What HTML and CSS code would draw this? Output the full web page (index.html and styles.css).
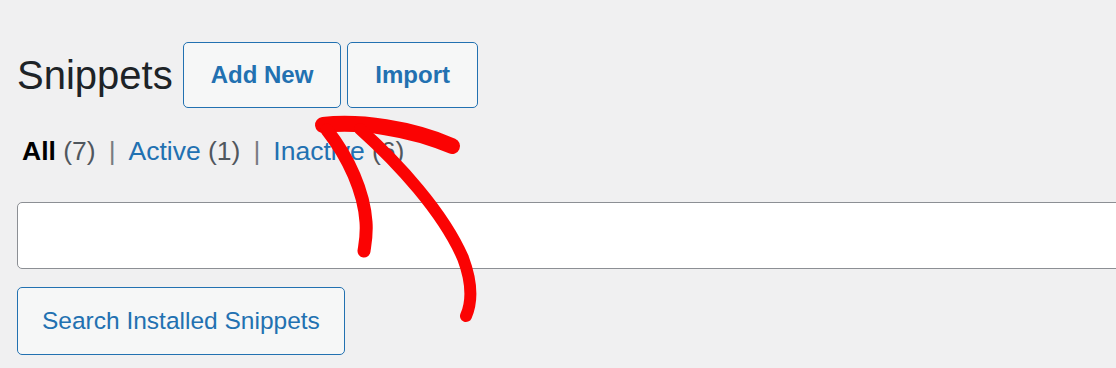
FILE: index.html
```html
<!DOCTYPE html>
<html lang="en">
<head>
    <meta charset="utf-8">
    <title>Snippets</title>
    <link rel="stylesheet" href="styles.css">
</head>

<body>
    <div class="wrap">
        <!-- Page title with actions -->
        <div class="title-row">
            <h1 class="page-title">Snippets</h1>
            <a class="title-action" href="#">Add New</a>
            <a class="title-action" href="#">Import</a>
        </div>

        <!-- Status filters -->
        <ul class="subsubsub">
            <li class="current">All <span class="count">(7)</span></li>
            <li class="sep">|</li>
            <li><a href="#">Active <span class="count">(1)</span></a></li>
            <li class="sep">|</li>
            <li><a href="#">Inactive <span class="count">(6)</span></a></li>
        </ul>

        <!-- Search -->
        <div class="search-box">
            <input type="search" class="search-input" />
            <button class="search-button">Search Installed Snippets</button>
        </div>
    </div>

    <!-- Hand drawn arrow over the page -->
    <svg class="annotation" width="1116" height="368" viewBox="0 0 1116 368">
        <g fill="none" stroke="#fb0303" stroke-linecap="round" stroke-linejoin="round">
            <path d="M 323 125 C 360 121, 410 128, 452 146" stroke-width="16" />
            <path d="M 327 130 C 349 158, 364 192, 366 222 C 367 235, 365 244, 364 251" stroke-width="13" />
            <path d="M 360 129 C 398 163, 443 212, 463 258 C 472 282, 473 300, 466 316" stroke-width="12" />
        </g>
    </svg>
</body>
</html>
```

FILE: styles.css
```css
body {
    margin: 0;
    padding: 0;
    background-color: #f0f0f1;
    color: #1d2327;
    font-family: "Liberation Sans", Arial, Helvetica, sans-serif;
    overflow: hidden;
}

.wrap {
    padding-left: 17px;
    overflow: hidden;
}

/* Title row */
.title-row {
    display: flex;
    align-items: center;
    margin-top: 42px;
}

.page-title {
    margin: 0 10px 0 0;
    font-size: 40px;
    font-weight: 400;
    line-height: 52px;
    color: #1d2327;
}

.title-action {
    display: block;
    margin-right: 6px;
    padding: 18px 27px;
    line-height: 28px;
    font-size: 24px;
    font-weight: 700;
    color: #2271b1;
    text-decoration: none;
    background-color: #f6f7f7;
    border: 1px solid #2271b1;
    border-radius: 5px;
}

/* Filters */
.subsubsub {
    display: flex;
    list-style: none;
    margin: 25px 0 0 0;
    padding: 0 0 0 5px;
    font-size: 26.5px;
    line-height: 36px;
    color: #50575e;
}

.subsubsub .current {
    color: #000;
    font-weight: 700;
}

.subsubsub .current .count {
    font-weight: 400;
    color: #50575e;
}

.subsubsub a {
    color: #2271b1;
    text-decoration: none;
}

.subsubsub a .count {
    color: #50575e;
}

.subsubsub .sep {
    margin: 0 13px;
    color: #787c82;
}

/* Search */
.search-box {
    display: flex;
    flex-direction: column;
    align-items: flex-start;
}

.search-input {
    box-sizing: border-box;
    width: 1130px;
    height: 67px;
    margin: 33px 0 0 0;
    padding: 0 12px;
    background-color: #fff;
    border: 1px solid #8c8f94;
    border-radius: 5px;
    font-size: 24px;
}

.search-button {
    box-sizing: border-box;
    height: 68px;
    margin-top: 18px;
    padding: 0 24px;
    font-family: "Liberation Sans", Arial, Helvetica, sans-serif;
    font-size: 24.5px;
    color: #2271b1;
    background-color: #f6f7f7;
    border: 1px solid #2271b1;
    border-radius: 5px;
    cursor: pointer;
}

/* Annotation arrow */
.annotation {
    position: absolute;
    top: 0;
    left: 0;
    pointer-events: none;
}
```
